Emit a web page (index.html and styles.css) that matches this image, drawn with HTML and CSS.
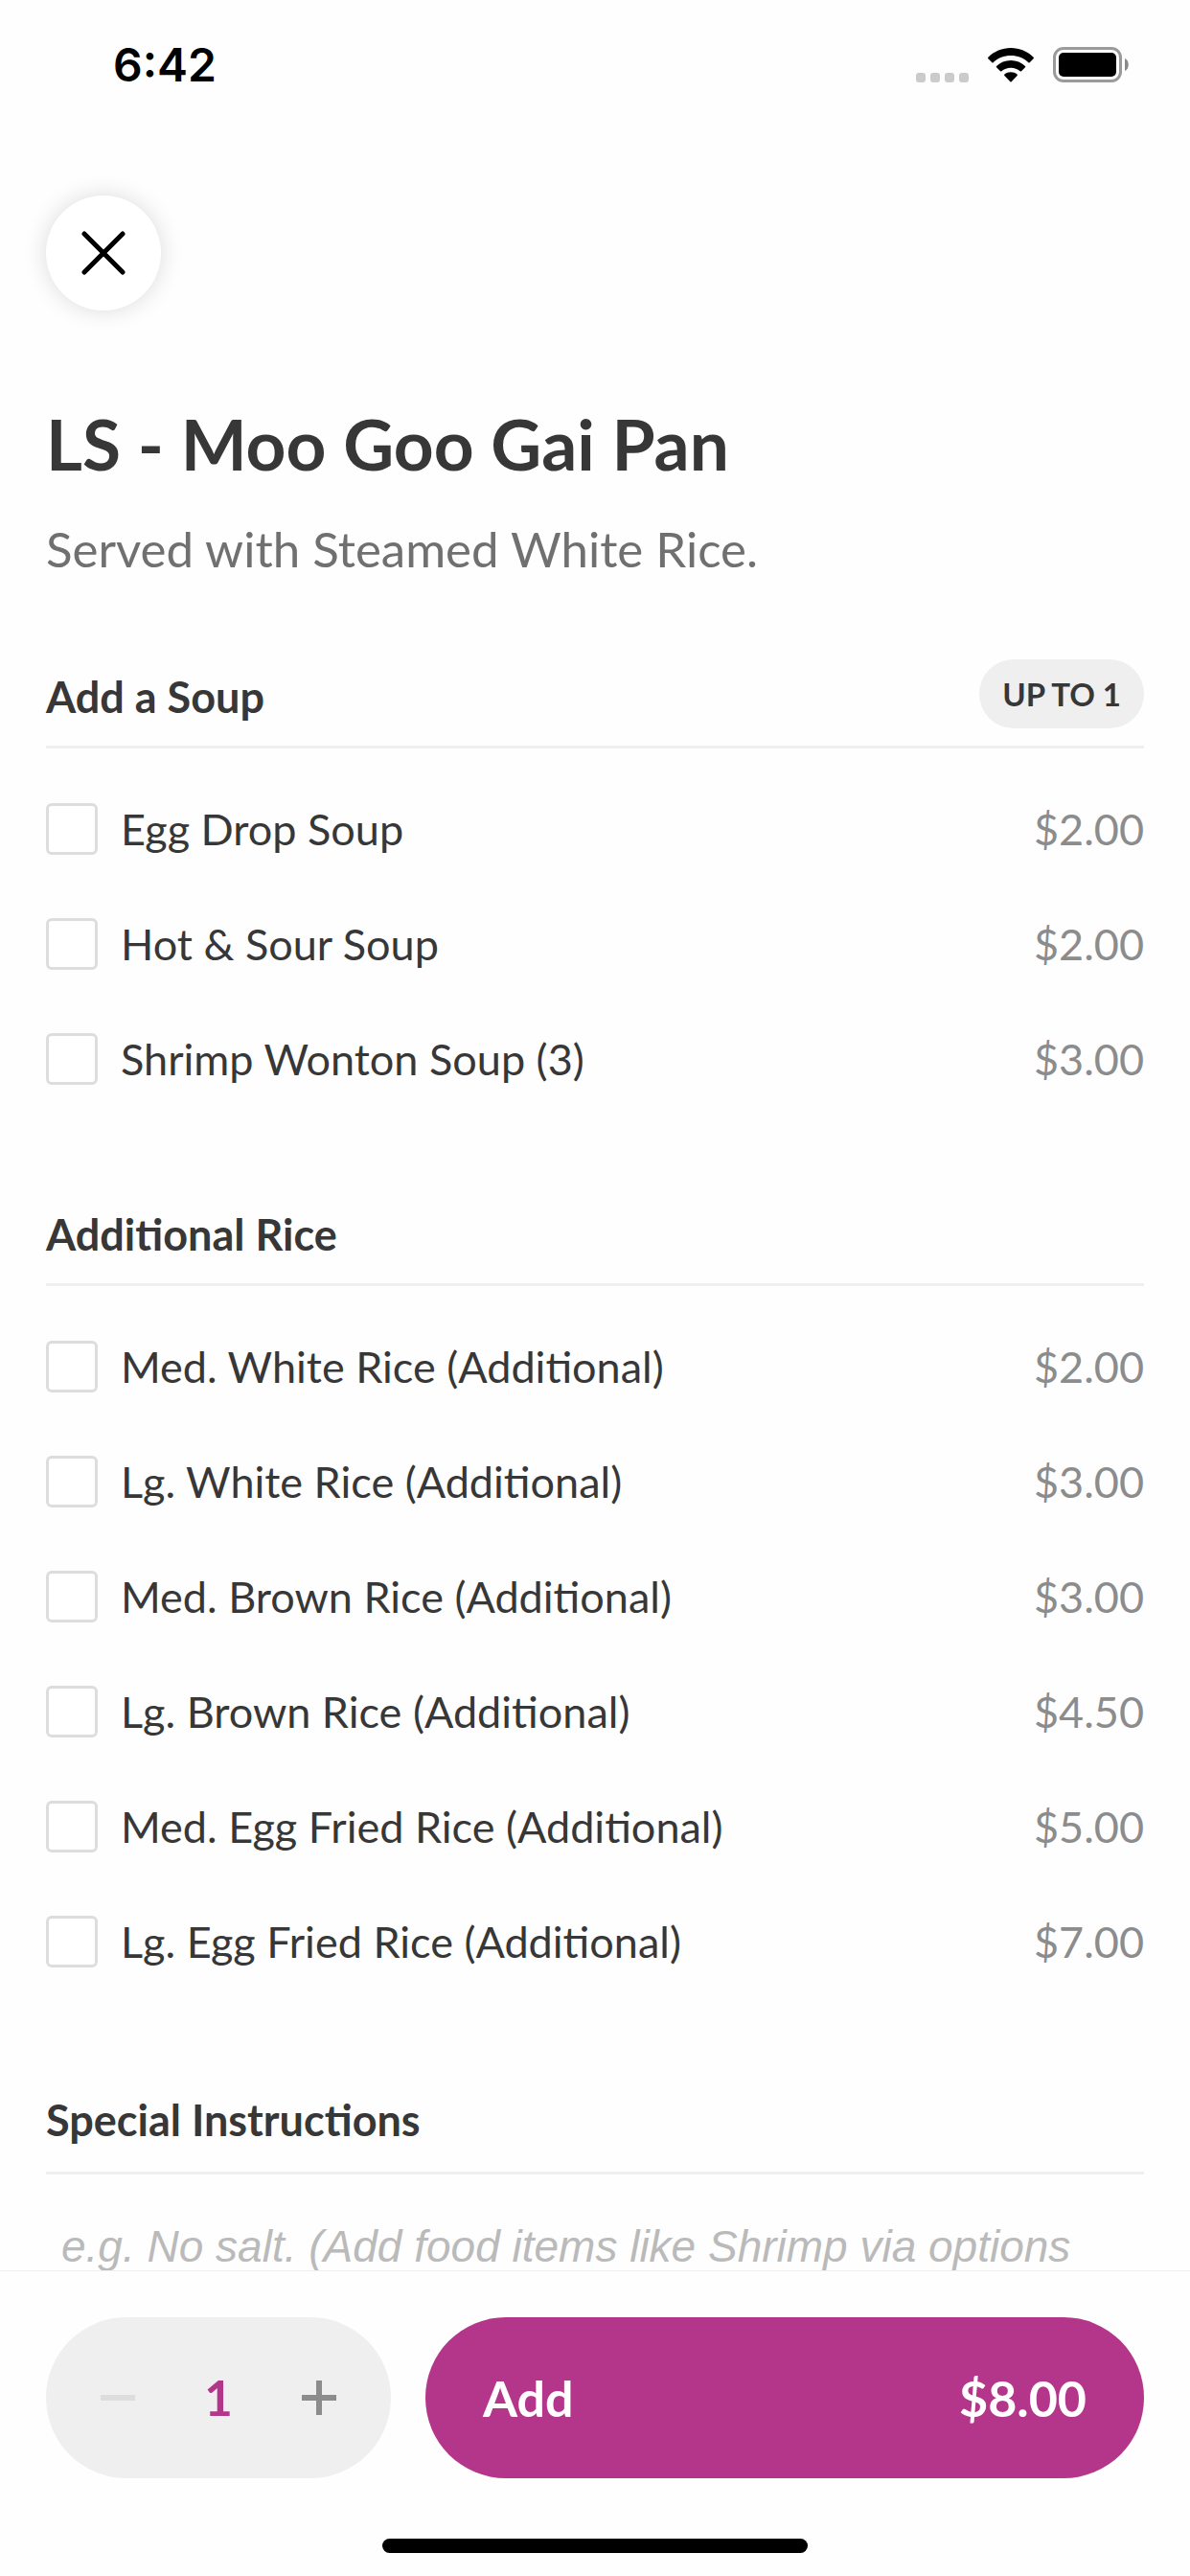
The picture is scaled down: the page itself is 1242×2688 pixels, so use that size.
FILE: index.html
```html
<!DOCTYPE html>
<html lang="en">

<head>
    <meta charset="UTF-8">
    <meta name="viewport" content="width=device-width, initial-scale=1.0">
    <title>LS - Moo Goo Gai Pan</title>
    <link rel="stylesheet" href="styles.css">
</head>

<body>
    <div class="status-bar">
        <span class="status-time">6:42</span>
        <div class="status-icons">
            <svg class="icon-signal" width="55" height="10" viewBox="0 0 55 10" aria-hidden="true">
                <rect x="0" width="10" height="10" rx="3" />
                <rect x="15" width="10" height="10" rx="3" />
                <rect x="30" width="10" height="10" rx="3" />
                <rect x="45" width="10" height="10" rx="3" />
            </svg>
            <svg class="icon-wifi" width="48" height="36" viewBox="0 0 48 36" aria-hidden="true">
                <path d="M24 0C33 0 41.500 3.500 47.600 9.800Q48.300 10.500 47.600 11.200L43.600 15.200Q43 15.700 42.400 15.200C37.300 10.500 31 8 24 8S10.700 10.500 5.600 15.200Q5 15.700 4.400 15.200L.4 11.200Q-.3 10.500 .4 9.800C6.500 3.500 15 0 24 0Z" />
                <path d="M24 13C29.800 13 35 15.200 39 19Q39.600 19.600 39 20.200L35 24.300Q34.400 24.900 33.700 24.300C31 22 27.700 20.800 24 20.800S17 22 14.300 24.300Q13.600 24.900 13 24.300L9 20.200Q8.400 19.600 9 19C13 15.200 18.200 13 24 13Z" />
                <path d="M24 25.200C26.500 25.200 28.800 26 30.600 27.600Q31.200 28.200 30.600 28.900L24.600 35.300Q24 35.900 23.400 35.300L17.400 28.900Q16.800 28.200 17.400 27.600C19.200 26 21.500 25.200 24 25.200Z" />
            </svg>
            <svg class="icon-battery" width="80" height="37" viewBox="0 0 80 37" aria-hidden="true">
                <rect x="1.500" y="1.500" width="69" height="34" rx="9.500" fill="none" stroke="#9a9a9a" stroke-width="3" />
                <rect x="6" y="6" width="60" height="25" rx="5" />
                <path d="M75 12C80 14 80 23 75 25Z" fill="#8a8a8a" />
            </svg>
        </div>
    </div>

    <main class="content">
        <button type="button" class="close-btn" aria-label="Close">
            <svg width="46" height="46" viewBox="0 0 46 46" aria-hidden="true">
                <path d="M3 3L43 43M43 3L3 43" stroke="#000" stroke-width="5" stroke-linecap="round" />
            </svg>
        </button>

        <h1>LS - Moo Goo Gai Pan</h1>
        <p class="description">Served with Steamed White Rice.</p>

        <section class="option-group" aria-labelledby="soup-title">
            <div class="group-header">
                <h2 id="soup-title">Add a Soup</h2>
                <span class="badge">UP TO 1</span>
            </div>
            <ul class="options">
                <li><label class="option"><input type="checkbox" name="soup"><span class="option-name">Egg Drop Soup</span><span class="price">$2.00</span></label></li>
                <li><label class="option"><input type="checkbox" name="soup"><span class="option-name">Hot &amp; Sour Soup</span><span class="price">$2.00</span></label></li>
                <li><label class="option"><input type="checkbox" name="soup"><span class="option-name">Shrimp Wonton Soup (3)</span><span class="price">$3.00</span></label></li>
            </ul>
        </section>

        <section class="option-group" aria-labelledby="rice-title">
            <div class="group-header">
                <h2 id="rice-title">Additional Rice</h2>
            </div>
            <ul class="options">
                <li><label class="option"><input type="checkbox" name="rice"><span class="option-name">Med. White Rice (Additional)</span><span class="price">$2.00</span></label></li>
                <li><label class="option"><input type="checkbox" name="rice"><span class="option-name">Lg. White Rice (Additional)</span><span class="price">$3.00</span></label></li>
                <li><label class="option"><input type="checkbox" name="rice"><span class="option-name">Med. Brown Rice (Additional)</span><span class="price">$3.00</span></label></li>
                <li><label class="option"><input type="checkbox" name="rice"><span class="option-name">Lg. Brown Rice (Additional)</span><span class="price">$4.50</span></label></li>
                <li><label class="option"><input type="checkbox" name="rice"><span class="option-name">Med. Egg Fried Rice (Additional)</span><span class="price">$5.00</span></label></li>
                <li><label class="option"><input type="checkbox" name="rice"><span class="option-name">Lg. Egg Fried Rice (Additional)</span><span class="price">$7.00</span></label></li>
            </ul>
        </section>

        <section class="option-group notes">
            <div class="group-header">
                <h2><label for="instructions">Special Instructions</label></h2>
            </div>
            <textarea id="instructions" rows="1" placeholder="e.g. No salt. (Add food items like Shrimp via options"></textarea>
        </section>
    </main>

    <footer class="order-bar">
        <div class="order-actions">
            <div class="stepper">
                <button type="button" class="step-btn" aria-label="Decrease quantity" disabled>
                    <svg width="36" height="36" viewBox="0 0 36 36" aria-hidden="true">
                        <path d="M0 15H36V21H0Z" fill="currentColor" />
                    </svg>
                </button>
                <output class="quantity">1</output>
                <button type="button" class="step-btn" aria-label="Increase quantity">
                    <svg width="36" height="36" viewBox="0 0 36 36" aria-hidden="true">
                        <path d="M15 0H21V15H36V21H21V36H15V21H0V15H15Z" fill="currentColor" />
                    </svg>
                </button>
            </div>
            <button type="button" class="add-btn">
                <span>Add</span>
                <span>$8.00</span>
            </button>
        </div>
        <div class="home-indicator"></div>
    </footer>
</body>

</html>
```

FILE: styles.css
```css
:root {
    --primary-color: #b4368a;
    --background-color: #fefefe;
    --text-color: #373737;
    --text-muted: #707070;
    --price-color: #8c8c8c;
    --placeholder-color: #bababa;
    --border-color: #dddddd;
    --surface-color: #efefef;
    --font-family: Lato, sans-serif;
}

* {
    box-sizing: border-box;
}

body {
    font-family: var(--font-family);
    font-size: 45px;
    line-height: 54px;
    background-color: var(--background-color);
    color: var(--text-color);
    display: flex;
    flex-direction: column;
    min-height: 100vh;
    margin: 0;
}

button {
    font-family: inherit;
    border: none;
    padding: 0;
    cursor: pointer;
}

.status-bar {
    display: flex;
    justify-content: space-between;
    align-items: center;
    height: 132px;
    padding: 3px 63px 0 118px;
}

.status-time {
    font-family: Inter, sans-serif;
    font-size: 48px;
    font-weight: 600;
    color: #000;
}

.status-icons {
    display: flex;
    align-items: flex-end;
    gap: 20px;
}

.icon-signal {
    fill: #cbcbcb;
}

.content {
    flex: 1;
    padding: 72px 48px 0;
}

.close-btn {
    display: flex;
    justify-content: center;
    align-items: center;
    width: 120px;
    height: 120px;
    border-radius: 50%;
    background-color: #fff;
    box-shadow: 0 0 24px rgba(0, 0, 0, 0.14);
}

h1 {
    font-size: 73px;
    line-height: 86px;
    margin: 96px 0 36px;
}

.description {
    font-size: 51px;
    line-height: 62px;
    color: var(--text-muted);
    margin: 0;
}

.option-group {
    margin-top: 84px;
}

.group-header {
    display: flex;
    justify-content: space-between;
    align-items: center;
    min-height: 93px;
    padding-bottom: 18px;
    border-bottom: 3px solid var(--surface-color);
}

h2 {
    font-size: 45px;
    line-height: 54px;
    margin: 0;
    padding-top: 6px;
}

.badge {
    background-color: var(--surface-color);
    border-radius: 36px;
    padding: 0 24px;
    font-size: 33px;
    font-weight: bold;
    line-height: 72px;
}

.options {
    list-style: none;
    margin: 24px 0 0;
    padding: 0;
}

.option {
    display: flex;
    align-items: center;
    gap: 24px;
    height: 120px;
    cursor: pointer;
}

.option input {
    appearance: none;
    flex: none;
    width: 54px;
    height: 54px;
    margin: 0;
    border: 3px solid var(--border-color);
    border-radius: 6px;
    background-color: #fff;
}

.option input:checked {
    background-color: var(--primary-color);
    border-color: var(--primary-color);
}

.option-name {
    flex: 1;
}

.price {
    color: var(--price-color);
}

.notes .group-header {
    min-height: 99px;
}

textarea {
    display: block;
    width: 100%;
    height: 52px;
    margin-top: 48px;
    padding: 0 16px;
    border: none;
    outline: none;
    resize: none;
    overflow: hidden;
    background: transparent;
    color: var(--text-color);
    font-family: "Liberation Sans", Arial, sans-serif;
    font-size: 46px;
    font-style: italic;
    line-height: 54px;
}

textarea::placeholder {
    color: var(--placeholder-color);
}

.order-bar {
    position: sticky;
    bottom: 0;
    background-color: var(--background-color);
    border-top: 1px solid var(--surface-color);
    padding: 48px 48px 24px;
}

.order-actions {
    display: flex;
    gap: 36px;
    height: 168px;
}

.stepper {
    flex: 0 0 360px;
    display: flex;
    justify-content: space-between;
    align-items: center;
    padding: 0 39px;
    border-radius: 84px;
    background-color: var(--surface-color);
}

.step-btn {
    display: flex;
    justify-content: center;
    align-items: center;
    width: 72px;
    height: 72px;
    background: none;
    color: var(--price-color);
}

.step-btn:disabled {
    color: var(--border-color);
    cursor: default;
}

.quantity {
    font-size: 51px;
    font-weight: bold;
    color: var(--primary-color);
}

.add-btn {
    flex: 1;
    display: flex;
    justify-content: space-between;
    align-items: center;
    padding: 0 60px;
    border-radius: 84px;
    background-color: var(--primary-color);
    color: #fff;
    font-size: 52px;
    font-weight: bold;
}

.home-indicator {
    width: 444px;
    max-width: 100%;
    height: 15px;
    margin: 63px auto 0;
    border-radius: 8px;
    background-color: #000;
}
```
